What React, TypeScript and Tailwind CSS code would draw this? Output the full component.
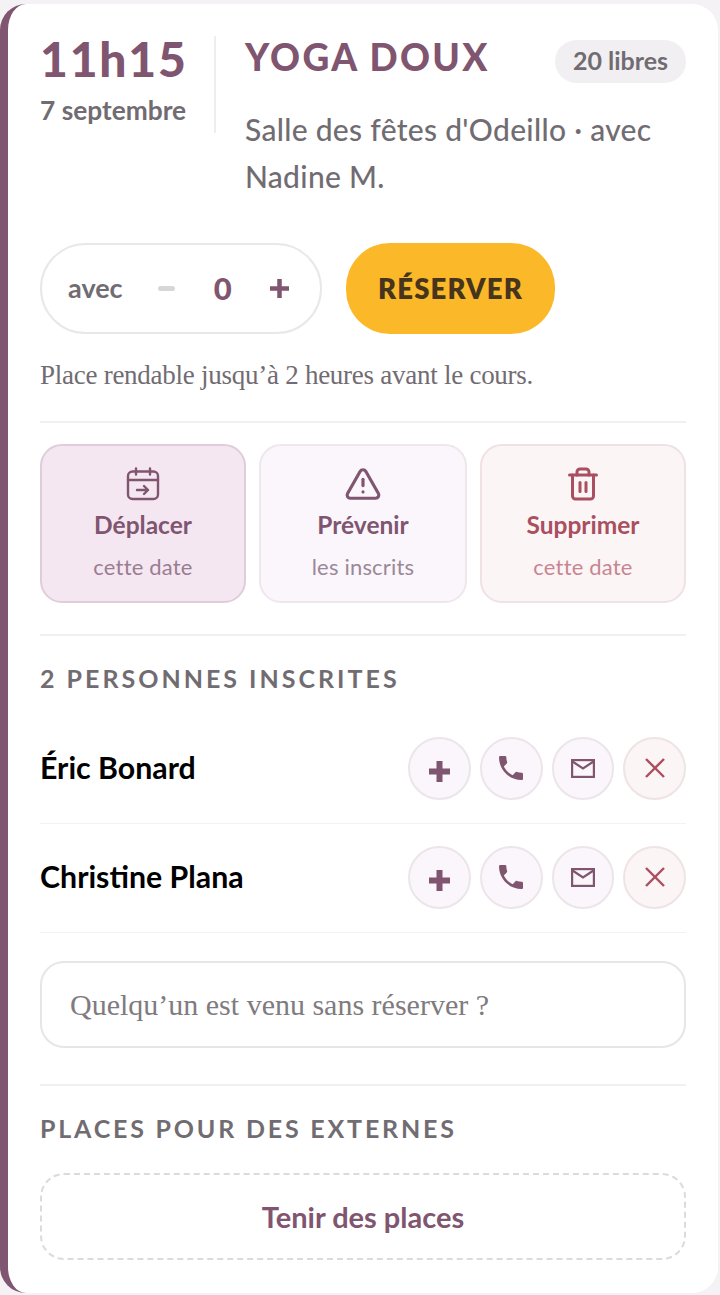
import { TriangleAlert, Trash2, X } from "lucide-react";

const sans = "font-['Lato','Noto_Sans',sans-serif]";
const serif = "font-['Liberation_Serif',serif]";

function CalendarMove() {
  return (
    <svg width="36" height="36" viewBox="0 0 36 36" fill="none" stroke="currentColor" strokeWidth="2.4" strokeLinecap="round" strokeLinejoin="round">
      <rect x="3" y="5.5" width="30" height="27.5" rx="4.5" />
      <path d="M3 14h30M11 2.5v6M25 2.5v6" />
      <path d="M12 24h11M19 20l4 4-4 4" />
    </svg>
  );
}

function ActionCard({ icon, title, sub, box, titleC, subC }: { icon: React.ReactNode; title: string; sub: string; box: string; titleC: string; subC: string }) {
  return (
    <div className={`flex h-[159px] flex-col items-center rounded-[22px] border-2 pt-[19px] ${box}`}>
      <div className={`flex h-[38px] items-center ${titleC}`}>{icon}</div>
      <div className={`mt-[7px] text-[24.500px] leading-[30px] font-bold ${titleC}`}>{title}</div>
      <div className={`mt-[13px] text-[22px] leading-[28px] tracking-[0.2px] ${subC}`}>{sub}</div>
    </div>
  );
}

function RoundBtn({ children, red }: { children: React.ReactNode; red?: boolean }) {
  return (
    <div className={`flex h-[63px] w-[62.750px] items-center justify-center rounded-full border-2 ${red ? "border-[#efe3e5] bg-[#fcf5f5] text-[#a94f60]" : "border-[#ece5ea] bg-[#fbf6fb] text-[#7f5570]"}`}>
      {children}
    </div>
  );
}

function Person({ name }: { name: string }) {
  return (
    <div className="flex h-[109px] items-center justify-between border-b border-[#f3f1f3] pb-[2px]">
      <div className="text-[30.300px] font-bold text-black">{name}</div>
      <div className="flex gap-[9px]">
        <RoundBtn>
          <svg width="21" height="21" viewBox="0 0 21 21" className="mt-[7px]" fill="currentColor"><path d="M7.500 0h6v7.500H21v6h-7.500V21h-6v-7.500H0v-6h7.500z" /></svg>
        </RoundBtn>
        <RoundBtn>
          <svg width="32" height="32" viewBox="0 0 24 24" fill="currentColor"><path d="M6.620 10.790c1.440 2.830 3.760 5.140 6.590 6.590l2.200-2.200c.27-.27.67-.36 1.020-.24 1.120.37 2.330.57 3.570.57.55 0 1 .45 1 1V20c0 .55-.45 1-1 1-9.390 0-17-7.610-17-17 0-.55.45-1 1-1h3.500c.55 0 1 .45 1 1 0 1.250.2 2.450.57 3.570.11.35.03.74-.25 1.020l-2.200 2.200z" /></svg>
        </RoundBtn>
        <RoundBtn>
          <svg width="24" height="19" viewBox="0 0 24 19" fill="none" stroke="currentColor" strokeWidth="2.200" strokeLinejoin="miter"><rect x="1.100" y="1.100" width="21.800" height="16.800" /><path d="M1.500 2.500l10.500 7 10.500-7" /></svg>
        </RoundBtn>
        <RoundBtn red><X size={36} strokeWidth={1.6} strokeLinecap="butt" /></RoundBtn>
      </div>
    </div>
  );
}

export default function App() {
  return (
    <div className={`min-h-[1295px] w-[720px] bg-[#f4f2f4] pt-[4px] pb-[2px] pr-[2px] ${sans}`}>
      <div className="h-[1289px] rounded-[26px] border-l-[8px] border-[#7f5570] bg-white pt-[32px] pr-[32px] pl-[32px]">
        <div className="flex">
          <div className="flex h-[97px] w-[176px] flex-col border-r-2 border-[#efedef]">
            <div className="text-[48px] leading-[46px] font-black tracking-[1.800px] text-[#7f5570]">11h15</div>
            <div className="mt-[12px] text-[26.300px] leading-[32px] font-bold text-[#716c72]">7 septembre</div>
          </div>
          <div className="ml-[29px] flex-1">
            <div className="flex items-start justify-between">
              <div className="text-[37px] leading-[42px] font-black tracking-[2.350px] text-[#7f5570]">YOGA DOUX</div>
              <div className="mt-[4px] flex h-[43px] w-[131px] items-center justify-center rounded-full bg-[#f2eff2] pb-[2px] text-[25px] font-bold text-[#716c72]">20 libres</div>
            </div>
            <div className="mt-[23px] text-[30px] leading-[47px] font-medium tracking-[0.3px] text-[#716c72]">Salle des fêtes d'Odeillo · avec Nadine M.</div>
          </div>
        </div>

        <div className="mt-[43px] flex gap-[24px]">
          <div className="flex h-[91px] w-[282px] items-center rounded-full border-2 border-[#e9e7e9] pl-[26px]">
            <span className="text-[27px] font-bold text-[#716c72]">avec</span>
            <span className="ml-[35px] h-[5px] w-[17px] rounded-sm bg-[#d9d6d9]" />
            <span className="ml-[39px] text-[31px] font-black text-[#7f5570]">0</span>
            <svg className="ml-[38px]" width="19" height="19" viewBox="0 0 19 19" fill="#7f5570"><path d="M7.250 0h4.500v7.250H19v4.500h-7.250V19h-4.500v-7.250H0v-4.500h7.250z" /></svg>
          </div>
          <div className="flex h-[91px] w-[209px] items-center justify-center rounded-[44px] bg-[#fbb829] text-[27.500px] font-extrabold tracking-[1.200px] text-[#46351c]">RÉSERVER</div>
        </div>

        <div className={`mt-[23px] text-[27px] leading-[36px] tracking-[-0.26px] text-[#716c72] ${serif}`}>Place rendable jusqu’à 2 heures avant le cours.</div>

        <div className="mt-[28px] border-t-2 border-[#f1eff1] pt-[21px]">
          <div className="grid grid-cols-[206px_208px_206px] gap-[13px]">
            <ActionCard icon={<CalendarMove />} title="Déplacer" sub="cette date" box="border-[#dfcdd9] bg-[#f4e7f1]" titleC="text-[#7f5570]" subC="text-[#9a7d91]" />
            <ActionCard icon={<TriangleAlert size={38} strokeWidth={2} />} title="Prévenir" sub="les inscrits" box="border-[#eee7ec] bg-[#fbf6fb]" titleC="text-[#7f5570]" subC="text-[#9a8898]" />
            <ActionCard icon={<Trash2 size={36} strokeWidth={2} />} title="Supprimer" sub="cette date" box="border-[#efe1e4] bg-[#fcf5f5]" titleC="text-[#a94f60]" subC="text-[#c98593]" />
          </div>
        </div>

        <div className="mt-[31px] border-t-2 border-[#f1eff1] pt-[25px]">
          <div className="text-[25px] leading-[34px] font-bold tracking-[3px] text-[#716c72]">2 PERSONNES INSCRITES</div>
        </div>

        <div className="mt-[20px]">
          <Person name="Éric Bonard" />
          <Person name="Christine Plana" />
        </div>

        <div className={`mt-[28px] flex h-[87px] items-center rounded-[24px] border-2 border-[#e7e5e7] pl-[28px] text-[30px] text-[#7f7b80] ${serif}`}>Quelqu’un est venu sans réserver ?</div>

        <div className="mt-[36px] border-t-2 border-[#f1eff1] pt-[25px]">
          <div className="text-[25px] leading-[34px] font-bold tracking-[2.800px] text-[#716c72]">PLACES POUR DES EXTERNES</div>
        </div>

        <div className="mt-[28px] flex h-[87px] items-center justify-center rounded-[24px] border-2 border-dashed border-[#dcdadc] text-[29px] font-bold text-[#7f5570]">Tenir des places</div>
      </div>
    </div>
  );
}
